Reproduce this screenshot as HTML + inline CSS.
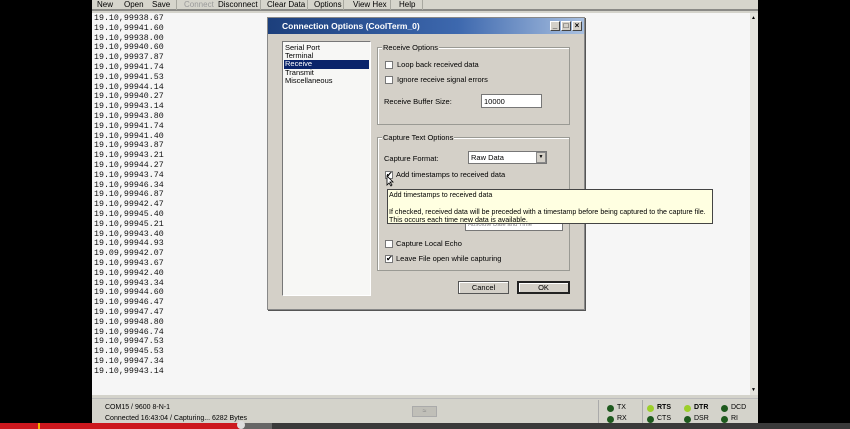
<!DOCTYPE html>
<html><head><style>
*{margin:0;padding:0;box-sizing:border-box}
body{width:850px;height:429px;background:#000;position:relative;overflow:hidden;font-family:"Liberation Sans",sans-serif;font-size:8px;color:#000}
.abs{position:absolute}
#app{left:92px;top:0;width:666px;height:423px;background:#d4d3cb}
#tb{left:92px;top:0;width:666px;height:11px;background:#d6d5cc;border-bottom:2px solid #8a8a86}
#tb span{position:absolute;top:0;font-size:8px;line-height:9px}
#tb i{position:absolute;top:0;width:1px;height:10px;background:#a8a8a0}
#txt{left:92px;top:13px;width:658px;height:382px;background:#f6f6f6}
#lines{left:94px;top:14px;font-family:"Liberation Mono",monospace;font-size:8.3px;line-height:9.8px;color:#111}
#sb{left:750px;top:13px;width:8px;height:382px;background:#e4e3dc}
#dlg{left:267px;top:17px;width:318px;height:293px;background:#d4d0c8;border:1px solid #888;box-shadow:1px 1px 0 #555}
#title{left:0;top:0;width:316px;height:16px;background:linear-gradient(90deg,#1c3f7c,#3d68ae 60%,#a9c0e0);color:#fff;font-weight:bold;font-size:8.5px;line-height:16px;padding-left:14px}
.wb{position:absolute;top:3px;width:10px;height:10px;background:#d4d0c8;border:1px solid #fff;border-right-color:#444;border-bottom-color:#444;font-size:8px;line-height:8px;text-align:center;color:#000}
#list{left:14px;top:23px;width:89px;height:255px;background:#f7f7f5;border:1px solid #777;border-right-color:#fff;border-bottom-color:#fff;font-size:7.5px;line-height:8.2px;padding:2px 2px}
.grp{position:absolute;border:1px solid #9a9a94;box-shadow:1px 1px 0 #fff inset}
.grp b{position:absolute;top:-5px;left:4px;background:#d4d0c8;font-weight:normal;padding:0 1px;font-size:7.5px}
.cb{position:absolute;width:8px;height:8px;background:#fff;border:1px solid #777;font-size:8px;line-height:6px}
.lbl{position:absolute;font-size:7.5px;white-space:nowrap}
.btn{position:absolute;height:13px;border:1px solid #555;background:#d4d0c8;text-align:center;font-size:7.5px;line-height:11px;box-shadow:inset 1px 1px 0 #fff}
#tip{left:387px;top:189px;width:326px;height:35px;background:#ffffe1;border:1px solid #444;font-size:7.1px;line-height:8.4px;padding:1px 1px;white-space:nowrap;overflow:hidden}
#status{left:92px;top:398px;width:666px;height:25px;background:#d4d3cb;border-top:1px solid #bbb}
.led{position:absolute;width:7px;height:7px;border-radius:50%;background:#1e5a1e}
.led.on{background:#9ccf2a}
.sl{position:absolute;font-size:7px}
</style></head><body>
<div id="app" class="abs"></div>
<div id="tb" class="abs">
<span style="left:5px">New</span><span style="left:32px">Open</span><span style="left:60px">Save</span><i style="left:84px"></i><span style="left:92px;color:#999">Connect</span><span style="left:126px">Disconnect</span><i style="left:168px"></i><span style="left:175px">Clear Data</span><i style="left:215px"></i><span style="left:222px">Options</span><i style="left:251px"></i><span style="left:261px">View Hex</span><i style="left:298px"></i><span style="left:307px">Help</span><i style="left:330px"></i>
</div>
<div id="txt" class="abs"></div>
<div id="sb" class="abs"><div style="position:absolute;top:2px;left:1px;font-size:5px">▲</div><div style="position:absolute;bottom:2px;left:1px;font-size:5px">▼</div></div>
<div id="lines" class="abs">19.10,99938.67<br>19.10,99941.60<br>19.10,99938.00<br>19.10,99940.60<br>19.10,99937.87<br>19.10,99941.74<br>19.10,99941.53<br>19.10,99944.14<br>19.10,99940.27<br>19.10,99943.14<br>19.10,99943.80<br>19.10,99941.74<br>19.10,99941.40<br>19.10,99943.87<br>19.10,99943.21<br>19.10,99944.27<br>19.10,99943.74<br>19.10,99946.34<br>19.10,99946.87<br>19.10,99942.47<br>19.10,99945.40<br>19.10,99945.21<br>19.10,99943.40<br>19.10,99944.93<br>19.09,99942.07<br>19.10,99943.67<br>19.10,99942.40<br>19.10,99943.34<br>19.10,99944.60<br>19.10,99946.47<br>19.10,99947.47<br>19.10,99948.80<br>19.10,99946.74<br>19.10,99947.53<br>19.10,99945.53<br>19.10,99947.34<br>19.10,99943.14</div>

<div id="dlg" class="abs">
<div id="title" class="abs">Connection Options (CoolTerm_0)
<div class="wb" style="left:282px">_</div><div class="wb" style="left:293px">□</div><div class="wb" style="left:304px;font-weight:bold">×</div></div>
<div id="list" class="abs">Serial Port<br>Terminal<br><div style="background:#0a246a;color:#fff;margin:0 -1px;padding-left:1px">Receive</div>Transmit<br>Miscellaneous</div>
<div class="grp" style="left:109px;top:29px;width:193px;height:78px"><b>Receive Options</b>
<div class="cb" style="left:7px;top:13px"></div><div class="lbl" style="left:19px;top:12px">Loop back received data</div>
<div class="cb" style="left:7px;top:28px"></div><div class="lbl" style="left:19px;top:27px">Ignore receive signal errors</div>
<div class="lbl" style="left:6px;top:49px">Receive Buffer Size:</div>
<div style="position:absolute;left:103px;top:46px;width:61px;height:14px;background:#fff;border:1px solid #777;font-size:7.5px;padding:2px 2px">10000</div>
</div>
<div class="grp" style="left:109px;top:119px;width:193px;height:134px"><b>Capture Text Options</b>
<div class="lbl" style="left:6px;top:16px">Capture Format:</div>
<div style="position:absolute;left:90px;top:13px;width:79px;height:13px;background:#fff;border:1px solid #777;font-size:7.5px;padding:1px 2px">Raw Data<div style="position:absolute;right:0;top:0;width:10px;height:11px;background:#d4d0c8;border:1px solid #888;font-size:5px;text-align:center;line-height:9px">▼</div></div>
<div class="cb" style="left:7px;top:33px">✔</div><div class="lbl" style="left:18px;top:32px">Add timestamps to received data</div>
<div style="position:absolute;left:87px;top:83px;width:98px;height:10px;background:#fff;border:1px solid #777;font-size:6px;color:#888;padding-left:2px;line-height:6px">Absolute Date and Time</div>
<div class="cb" style="left:7px;top:102px"></div><div class="lbl" style="left:18px;top:101px">Capture Local Echo</div>
<div class="cb" style="left:7px;top:117px">✔</div><div class="lbl" style="left:18px;top:116px">Leave File open while capturing</div>
</div>
<div class="btn" style="left:190px;top:263px;width:51px">Cancel</div>
<div class="btn" style="left:249px;top:263px;width:53px;border:2px solid #222;line-height:9px">OK</div>
</div>
<div id="tip" class="abs">Add timestamps to received data<br><br>If checked, received data will be preceded with a timestamp before being captured to the capture file.<br>This occurs each time new data is available.</div>
<svg class="abs" style="left:386px;top:175px" width="8" height="12"><path d="M1 1 L1 10 L3 8 L5 11 L6 10 L4 7 L7 7 Z" fill="#fff" stroke="#000" stroke-width="0.8"/></svg>

<div id="status" class="abs">
<div class="sl" style="left:13px;top:5px">COM15 / 9600 8-N-1</div>
<div class="sl" style="left:13px;top:16px">Connected 16:43:04 / Capturing... 6282 Bytes</div>
<div style="position:absolute;left:320px;top:7px;width:25px;height:11px;background:#c0bfb8;border:1px solid #aaa;font-size:7px;text-align:center;color:#888;line-height:9px">≈</div>
<div style="position:absolute;left:506px;top:1px;width:1px;height:24px;background:#aaa"></div>
<div style="position:absolute;left:550px;top:1px;width:1px;height:24px;background:#aaa"></div>
<div class="led" style="left:515px;top:6px"></div><div class="sl" style="left:525px;top:5px">TX</div>
<div class="led" style="left:515px;top:17px"></div><div class="sl" style="left:525px;top:16px">RX</div>
<div class="led on" style="left:555px;top:6px"></div><div class="sl" style="left:565px;top:5px;font-weight:bold">RTS</div>
<div class="led" style="left:555px;top:17px"></div><div class="sl" style="left:565px;top:16px">CTS</div>
<div class="led on" style="left:592px;top:6px"></div><div class="sl" style="left:602px;top:5px;font-weight:bold">DTR</div>
<div class="led" style="left:592px;top:17px"></div><div class="sl" style="left:602px;top:16px">DSR</div>
<div class="led" style="left:629px;top:6px"></div><div class="sl" style="left:639px;top:5px">DCD</div>
<div class="led" style="left:629px;top:17px"></div><div class="sl" style="left:639px;top:16px">RI</div>
</div>
<div class="abs" style="left:0;top:423px;width:850px;height:6px;background:#3a3a3a"></div>
<div class="abs" style="left:0;top:423px;width:272px;height:6px;background:#666"></div>
<div class="abs" style="left:0;top:423px;width:240px;height:6px;background:#cc181e"></div>
<div class="abs" style="left:38px;top:423px;width:2px;height:6px;background:#f4b400"></div>
<div class="abs" style="left:237px;top:421px;width:8px;height:8px;border-radius:50%;background:#ddd"></div>
</body></html>
